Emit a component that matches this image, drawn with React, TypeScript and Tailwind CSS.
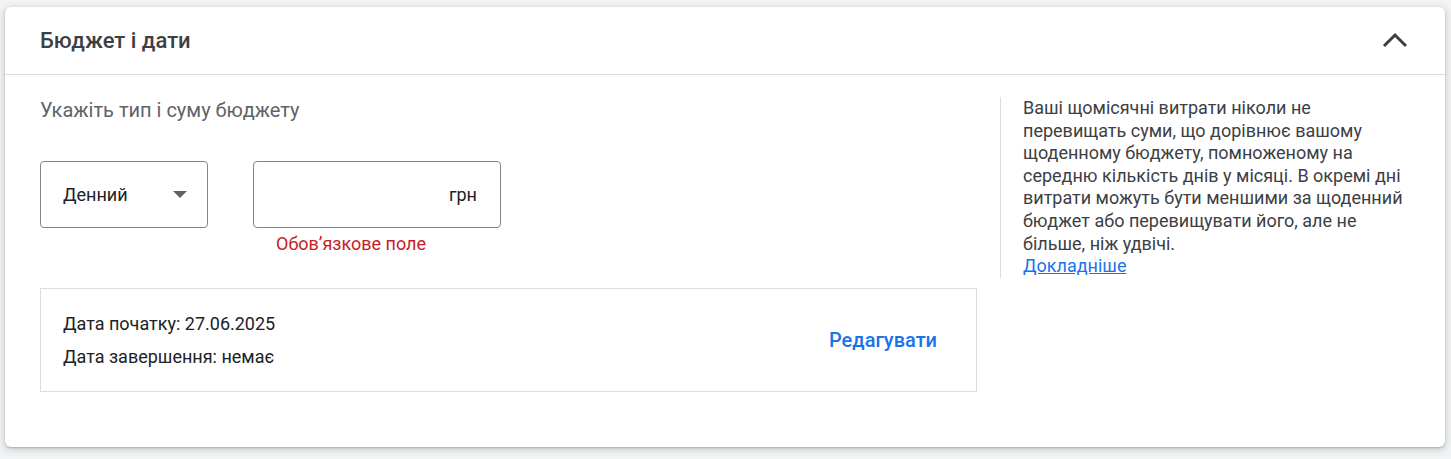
// Бюджет і дати — картка налаштувань кампанії
export default function App() {
  return (
    <div className="h-[459px] w-full overflow-hidden bg-[#f1f3f4] pt-[7px] pl-[5px] font-['Roboto','Liberation_Sans',sans-serif]">
      <section className="h-[440px] w-[1440px] rounded-md bg-white shadow-[0_1px_2px_rgba(60,64,67,0.3),0_2px_6px_2px_rgba(60,64,67,0.15)]">
        {/* Заголовок */}
        <header className="flex h-[68px] items-center justify-between border-b border-[#dadce0] pl-[35px] pr-[37px]">
          <h2 className="text-[22px] font-medium text-[#3c4043]">Бюджет і дати</h2>
          <svg width="26" height="16" viewBox="0 0 26 16" className="mt-[-2px]">
            <polyline points="2,14 13,3 24,14" fill="none" stroke="#3c4043" strokeWidth="3" />
          </svg>
        </header>

        {/* Вміст */}
        <div className="flex pt-[22px] pl-[35px]">
          <div className="w-[937px]">
            <p className="text-[20px] leading-[26px] text-[#5f6368]">Укажіть тип і суму бюджету</p>

            <div className="mt-[38px] flex gap-[45px]">
              <div className="flex h-[67px] w-[168px] items-center justify-between rounded border border-[#80868b] pl-[22px] pr-[20px]">
                <span className="text-[18px] text-[#202124]">Денний</span>
                <svg width="14" height="8" viewBox="0 0 14 8">
                  <path d="M0 0h14L7 7z" fill="#5f6368" />
                </svg>
              </div>
              <div>
                <div className="flex h-[67px] w-[248px] items-center justify-end rounded border border-[#80868b] pr-[23px]">
                  <span className="text-[18px] text-[#202124]">грн</span>
                </div>
                <p className="mt-[5px] pl-[23px] text-[18px] leading-[22px] text-[#c5221f]">Обов’язкове поле</p>
              </div>
            </div>

            <div className="mt-[33px] flex h-[104px] items-center justify-between border border-[#dadce0] pl-[22px] pr-[39px]">
              <div className="text-[18px] leading-[24px] text-[#202124]">
                <p>Дата початку: 27.06.2025</p>
                <p className="mt-[9px]">Дата завершення: немає</p>
              </div>
              <button className="text-[20px] font-medium text-[#1a73e8]">Редагувати</button>
            </div>
          </div>

          <div className="ml-[23px] self-start border-l border-[#dadce0] pl-[22px]">
            <p className="w-[380px] text-[18px] leading-[22.6px] text-[#3c4043]">
              Ваші щомісячні витрати ніколи не перевищать суми, що дорівнює вашому щоденному бюджету, помноженому на середню кількість днів у місяці. В окремі дні витрати можуть бути меншими за щоденний бюджет або перевищувати його, але не більше, ніж удвічі.
              <br />
              <a href="#" className="text-[#1a73e8] underline">Докладніше</a>
            </p>
          </div>
        </div>
      </section>
    </div>
  );
}
